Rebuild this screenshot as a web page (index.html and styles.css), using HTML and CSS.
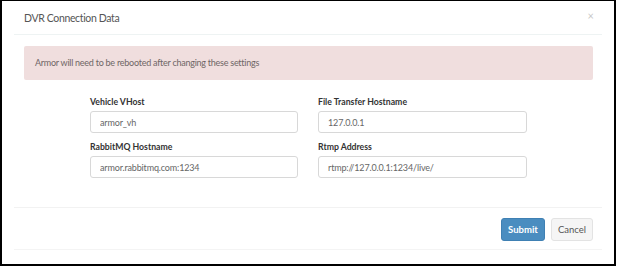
FILE: index.html
```
<!DOCTYPE html>
<html lang="en">
<head>
    <meta charset="UTF-8">
    <title>DVR Connection Data</title>
    <link rel="stylesheet" href="styles.css">
</head>
<body>
    <div class="frame">
        <div class="modal">
            <div class="modal-header">
                <h4 class="modal-title">DVR Connection Data</h4>
                <span class="close">&times;</span>
            </div>
            <div class="modal-body">
                <div class="alert">Armor will need to be rebooted after changing these settings</div>
                <div class="form-grid">
                    <div class="field">
                        <label for="vhost">Vehicle VHost</label>
                        <input type="text" id="vhost" value="armor_vh">
                    </div>
                    <div class="field">
                        <label for="fthost">File Transfer Hostname</label>
                        <input type="text" id="fthost" value="127.0.0.1">
                    </div>
                    <div class="field">
                        <label for="rmqhost">RabbitMQ Hostname</label>
                        <input type="text" id="rmqhost" value="armor.rabbitmq.com:1234">
                    </div>
                    <div class="field">
                        <label for="rtmp">Rtmp Address</label>
                        <input type="text" id="rtmp" value="rtmp://127.0.0.1:1234/live/">
                    </div>
                </div>
            </div>
            <div class="modal-footer">
                <button class="btn btn-primary">Submit</button>
                <button class="btn btn-default">Cancel</button>
            </div>
        </div>
    </div>
</body>
</html>
```

FILE: styles.css
```
body {
    margin: 0;
    background: #ffffff;
    font-family: "Lato", "Noto Sans", sans-serif;
}

.frame {
    width: 616px;
    height: 266px;
    box-sizing: border-box;
    border: 2px solid #000000;
    border-top-width: 1px;
    background: #ffffff;
    padding: 0 12px;
}

.modal {
    border-bottom: 1px solid #f4f4f4;
    height: 248px;
}

.modal-header {
    display: flex;
    justify-content: space-between;
    align-items: flex-start;
    height: 33px;
    border-bottom: 1px solid #eef3f3;
    padding: 0 10px;
}

.modal-title {
    margin: 11px 0 0 0;
    font-size: 10.5px;
    letter-spacing: -0.35px;
    font-weight: normal;
    color: #555555;
}

.close {
    margin: 8px -2px 0 0;
    font-size: 11px;
    color: #c8c8c8;
}

.modal-body {
    padding: 11px 9px 0 10px;
    height: 161px;
}

.alert {
    background: #f0dede;
    border-radius: 2px;
    height: 34px;
    line-height: 34px;
    padding-left: 11px;
    font-size: 9px;
    letter-spacing: -0.25px;
    color: #6f6666;
}

.form-grid {
    display: grid;
    grid-template-columns: 208px 209px;
    column-gap: 20px;
    row-gap: 8px;
    margin: 16px 0 0 66px;
}

.field label {
    display: block;
    font-size: 8.7px;
    line-height: 11px;
    font-weight: bold;
    color: #333333;
    margin-bottom: 4px;
}

.field input {
    display: block;
    width: 100%;
    height: 22px;
    box-sizing: border-box;
    border: 1px solid #d8d8d8;
    border-radius: 3px;
    padding: 0 9px;
    font-family: "Lato", "Noto Sans", sans-serif;
    font-size: 9px;
    letter-spacing: -0.15px;
    color: #666666;
    outline: none;
}

.modal-footer {
    border-top: 1px solid #f2f2f2;
    height: 41px;
    display: flex;
    justify-content: flex-end;
    align-items: flex-start;
    gap: 6px;
    padding: 10px 9px 0 0;
    box-sizing: border-box;
}

.btn {
    height: 23px;
    border-radius: 3px;
    font-family: "Lato", "Noto Sans", sans-serif;
    font-size: 9.5px;
    padding: 0 6px;
    cursor: pointer;
}

.btn-primary {
    width: 44px;
    background: #4a8dc0;
    border: 1px solid #3f80b3;
    color: #ffffff;
    font-weight: bold;
}

.btn-default {
    width: 42px;
    background: #f5f5f5;
    border: 1px solid #e3e3e3;
    color: #555555;
}
```
